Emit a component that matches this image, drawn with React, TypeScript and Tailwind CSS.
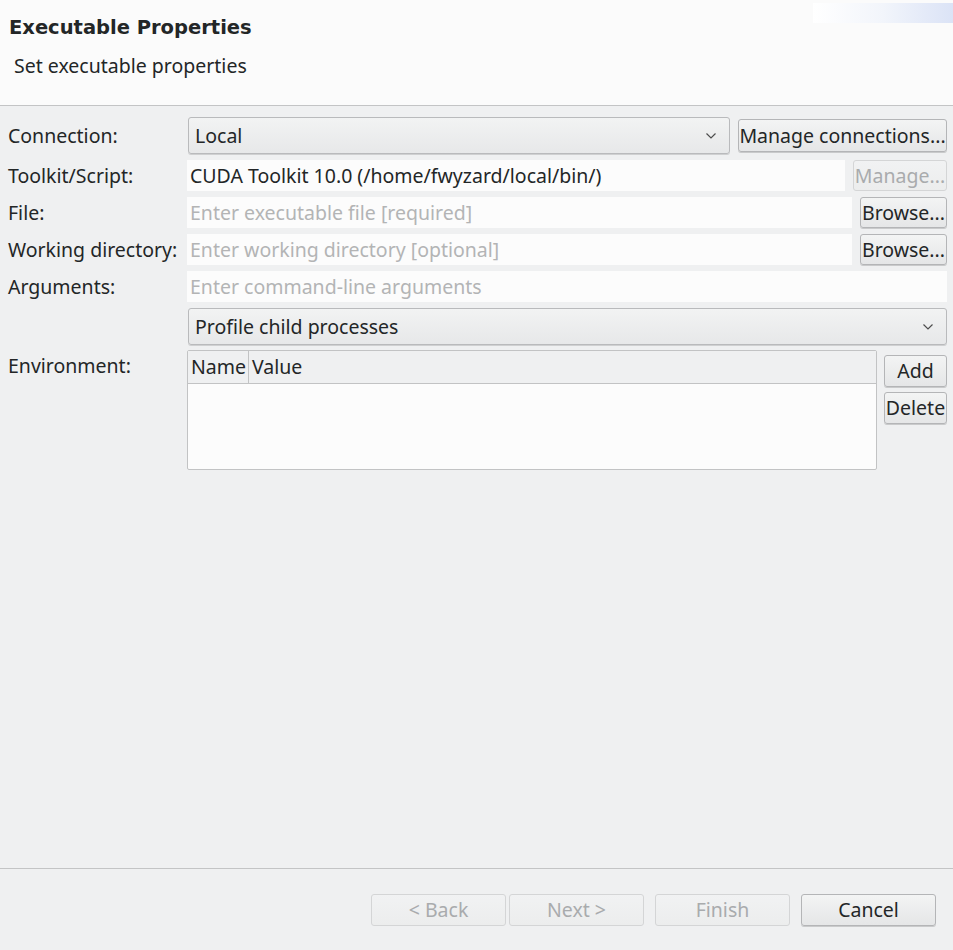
import React from "react";

const Chevron = () => (
  <svg width="12" height="8" viewBox="0 0 12 8" className="shrink-0">
    <path d="M1.5 1.5 L6 6 L10.5 1.5" fill="none" stroke="#4d4d4d" strokeWidth="1.2" />
  </svg>
);

const Btn = ({ children, className = "", disabled = false }: { children: React.ReactNode; className?: string; disabled?: boolean }) => (
  <div
    className={
      "flex items-center justify-center whitespace-nowrap rounded-[3px] border bg-gradient-to-b " +
      (disabled
        ? "border-[#d4d5d6] from-[#f1f2f3] to-[#eceded] text-[#a9abad] "
        : "border-[#b4b5b7] from-[#f3f4f4] to-[#e5e6e7] text-[#232627] shadow-[0_1px_0_#c9cacb] ") +
      className
    }
  >
    {children}
  </div>
);

const Combo = ({ label, className = "" }: { label: string; className?: string }) => (
  <div
    className={
      "flex items-center justify-between rounded-[3px] border border-[#b9babc] bg-gradient-to-b from-[#f2f3f3] to-[#e7e8e9] pl-[6px] pr-[12px] text-[#232627] shadow-[0_1px_0_#cfd0d1] " +
      className
    }
  >
    <span>{label}</span>
    <Chevron />
  </div>
);

export default function App() {
  return (
    <div
      className="flex h-[950px] w-[953px] flex-col bg-[#eff0f1] text-[19.5px] text-[#232627]"
      style={{ fontFamily: '"Noto Sans", "Open Sans", sans-serif' }}
    >
      {/* Header */}
      <div className="relative h-[106px] shrink-0 border-b border-[#c3c4c5] bg-[#fbfbfb]">
        <div className="absolute right-0 top-[3px] h-[20px] w-[140px] bg-gradient-to-r from-[#ffffff] via-[#f2f5fb] to-[#dbe3f6]" />
        <div
          className="pl-[9px] pt-[14px] text-[19.5px] font-bold leading-[28px] text-[#232627]"
          style={{ fontFamily: '"DejaVu Sans", sans-serif' }}
        >
          Executable Properties
        </div>
        <div className="pl-[14px] pt-[11px] leading-[26px]">Set executable properties</div>
      </div>

      {/* Body */}
      <div className="flex flex-1 flex-col px-[6px] pt-[11px]">
        <div className="grid grid-cols-[180px_1fr] gap-y-[6px]">
          <div className="flex h-[37px] items-center pl-[2px]">Connection:</div>
          <div className="flex h-[37px] gap-[8px] pl-[2px]">
            <Combo label="Local" className="h-[37px] flex-1" />
            <Btn className="mt-[2px] h-[33px] w-[209px]">Manage connections...</Btn>
          </div>

          <div className="flex h-[31px] items-center pl-[2px]">Toolkit/Script:</div>
          <div className="flex h-[31px] gap-[8px] pl-[1px]">
            <div className="flex h-[31px] flex-1 items-center bg-[#fcfcfc] pl-[3px]">CUDA Toolkit 10.0 (/home/fwyzard/local/bin/)</div>
            <Btn disabled className="h-[31px] w-[94px]">Manage...</Btn>
          </div>

          <div className="flex h-[31px] items-center pl-[2px]">File:</div>
          <div className="flex h-[31px] gap-[8px] pl-[1px]">
            <div className="flex h-[31px] flex-1 items-center bg-[#fcfcfc] pl-[3px] text-[#b3b4b5]">Enter executable file [required]</div>
            <Btn className="h-[31px] w-[87px]">Browse...</Btn>
          </div>

          <div className="flex h-[31px] items-center pl-[2px]">Working directory:</div>
          <div className="flex h-[31px] gap-[8px] pl-[1px]">
            <div className="flex h-[31px] flex-1 items-center bg-[#fcfcfc] pl-[3px] text-[#b3b4b5]">Enter working directory [optional]</div>
            <Btn className="h-[31px] w-[87px]">Browse...</Btn>
          </div>

          <div className="flex h-[31px] items-center pl-[2px]">Arguments:</div>
          <div className="flex h-[31px] pl-[1px]">
            <div className="flex h-[31px] flex-1 items-center bg-[#fcfcfc] pl-[3px] text-[#b3b4b5]">Enter command-line arguments</div>
          </div>

          <div />
          <div className="pl-[2px]">
            <Combo label="Profile child processes" className="h-[37px]" />
          </div>

          <div className="-mt-[1px] flex h-[31px] items-center pl-[2px]">Environment:</div>
          <div className="-mt-[1px] flex gap-[7px] pl-[1px]">
            <div className="flex h-[120px] flex-1 flex-col rounded-[2px] border border-[#c2c3c4] bg-[#fcfcfc]">
              <div className="flex h-[33px] shrink-0 border-b border-[#c2c3c4] bg-[#eff0f1]">
                <div className="flex w-[61px] items-center border-r border-[#c2c3c4] pl-[3px]">Name</div>
                <div className="flex items-center pl-[3px]">Value</div>
              </div>
            </div>
            <div className="flex w-[63px] flex-col gap-[5px] pt-[5px]">
              <Btn className="h-[32px]">Add</Btn>
              <Btn className="h-[32px]">Delete</Btn>
            </div>
          </div>
        </div>
      </div>

      {/* Footer */}
      <div className="flex h-[82px] shrink-0 items-start border-t border-[#c3c4c5] pr-[17px] pt-[25px]">
        <div className="flex flex-1 justify-end gap-[3px]">
          <Btn disabled className="h-[32px] w-[135px]">&lt; Back</Btn>
          <Btn disabled className="h-[32px] w-[135px]">Next &gt;</Btn>
        </div>
        <Btn disabled className="ml-[11px] h-[32px] w-[135px]">Finish</Btn>
        <Btn className="ml-[11px] h-[32px] w-[135px]">Cancel</Btn>
      </div>
    </div>
  );
}
